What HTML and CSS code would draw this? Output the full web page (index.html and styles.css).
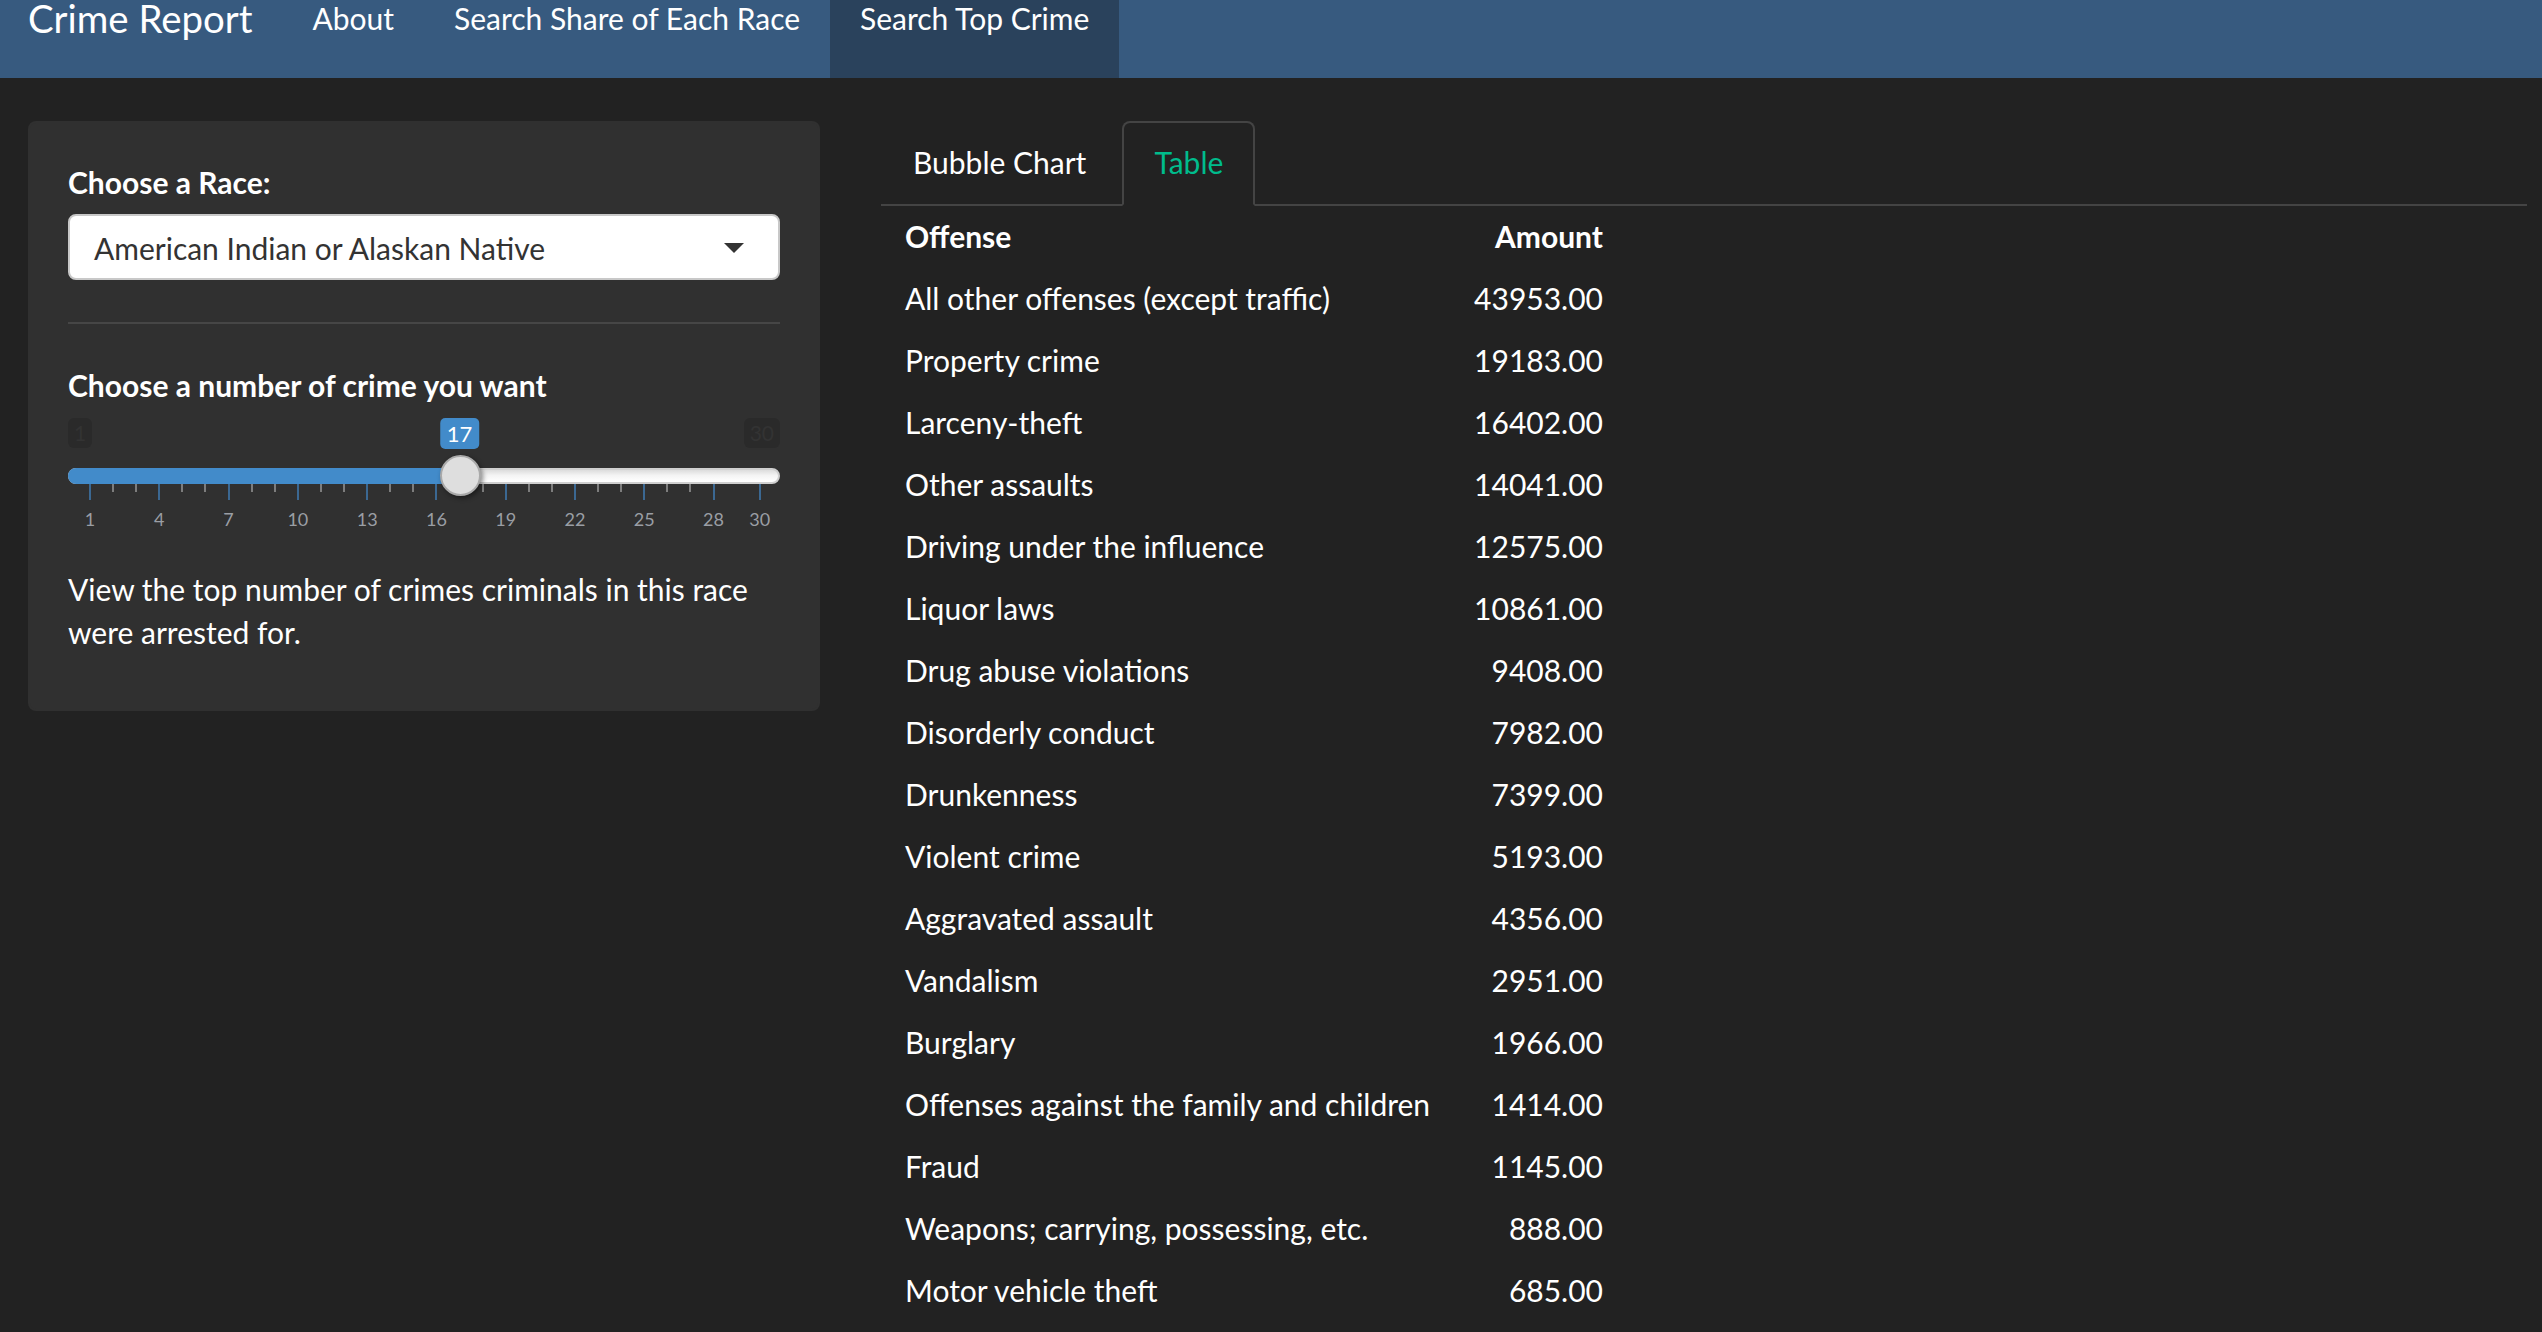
FILE: index.html
```html
<!DOCTYPE html>
<html lang="en">
<head>
<meta charset="utf-8">
<title>Crime Report</title>
<link rel="stylesheet" href="styles.css">
</head>
<body>
<nav class="navbar">
  <span class="brand">Crime Report</span>
  <ul class="nav">
    <li><a class="nav-link">About</a></li>
    <li><a class="nav-link">Search Share of Each Race</a></li>
    <li><a class="nav-link active">Search Top Crime</a></li>
  </ul>
</nav>

<div class="page">
  <aside class="well">
    <label class="control-label">Choose a Race:</label>
    <div class="select">
      <span class="select-value">American Indian or Alaskan Native</span>
      <span class="caret"></span>
    </div>
    <hr class="divider">
    <label class="control-label">Choose a number of crime you want</label>
    <div class="irs" style="--p:0.5517">
      <div class="irs-top">
        <span class="irs-min">1</span>
        <span class="irs-single">17</span>
        <span class="irs-max">30</span>
      </div>
      <div class="irs-line">
        <div class="irs-bar"></div>
        <div class="irs-handle"></div>
      </div>
      <div class="irs-grid">
        <div class="tk major"><i></i><b>1</b></div>
        <div class="tk"><i></i></div>
        <div class="tk"><i></i></div>
        <div class="tk major"><i></i><b>4</b></div>
        <div class="tk"><i></i></div>
        <div class="tk"><i></i></div>
        <div class="tk major"><i></i><b>7</b></div>
        <div class="tk"><i></i></div>
        <div class="tk"><i></i></div>
        <div class="tk major"><i></i><b>10</b></div>
        <div class="tk"><i></i></div>
        <div class="tk"><i></i></div>
        <div class="tk major"><i></i><b>13</b></div>
        <div class="tk"><i></i></div>
        <div class="tk"><i></i></div>
        <div class="tk major"><i></i><b>16</b></div>
        <div class="tk"><i></i></div>
        <div class="tk"><i></i></div>
        <div class="tk major"><i></i><b>19</b></div>
        <div class="tk"><i></i></div>
        <div class="tk"><i></i></div>
        <div class="tk major"><i></i><b>22</b></div>
        <div class="tk"><i></i></div>
        <div class="tk"><i></i></div>
        <div class="tk major"><i></i><b>25</b></div>
        <div class="tk"><i></i></div>
        <div class="tk"><i></i></div>
        <div class="tk major"><i></i><b>28</b></div>
        <div class="tk none"></div>
        <div class="tk major"><i></i><b>30</b></div>
      </div>
    </div>
    <p class="help">View the top number of crimes criminals in this race were arrested for.</p>
  </aside>

  <main class="main">
    <ul class="tabs">
      <li><a class="tab">Bubble Chart</a></li>
      <li><a class="tab active">Table</a></li>
    </ul>
    <table class="data">
      <thead>
        <tr><th>Offense</th><th class="num">Amount</th></tr>
      </thead>
      <tbody>
        <tr><td>All other offenses (except traffic)</td><td class="num">43953.00</td></tr>
        <tr><td>Property crime</td><td class="num">19183.00</td></tr>
        <tr><td>Larceny-theft</td><td class="num">16402.00</td></tr>
        <tr><td>Other assaults</td><td class="num">14041.00</td></tr>
        <tr><td>Driving under the influence</td><td class="num">12575.00</td></tr>
        <tr><td>Liquor laws</td><td class="num">10861.00</td></tr>
        <tr><td>Drug abuse violations</td><td class="num">9408.00</td></tr>
        <tr><td>Disorderly conduct</td><td class="num">7982.00</td></tr>
        <tr><td>Drunkenness</td><td class="num">7399.00</td></tr>
        <tr><td>Violent crime</td><td class="num">5193.00</td></tr>
        <tr><td>Aggravated assault</td><td class="num">4356.00</td></tr>
        <tr><td>Vandalism</td><td class="num">2951.00</td></tr>
        <tr><td>Burglary</td><td class="num">1966.00</td></tr>
        <tr><td>Offenses against the family and children</td><td class="num">1414.00</td></tr>
        <tr><td>Fraud</td><td class="num">1145.00</td></tr>
        <tr><td>Weapons; carrying, possessing, etc.</td><td class="num">888.00</td></tr>
        <tr><td>Motor vehicle theft</td><td class="num">685.00</td></tr>
      </tbody>
    </table>
  </main>
</div>
</body>
</html>
```

FILE: styles.css
```css
* { box-sizing: border-box; }

html, body {
  margin: 0;
  padding: 0;
  background: #222222;
  color: #ffffff;
  font-family: Lato, "Open Sans", "Liberation Sans", sans-serif;
  font-size: 30px;
  line-height: 42.86px;
  overflow: hidden;
}

/* ---------- navbar ---------- */
.navbar {
  display: flex;
  align-items: stretch;
  height: 78px;
  background: #375a7f;
  padding-left: 28px;
}

.brand {
  font-size: 38.4px;
  line-height: 36px;
  color: #ffffff;
  padding-right: 30px;
  white-space: nowrap;
}

.nav {
  display: flex;
  align-items: stretch;
  list-style: none;
  margin: 0;
  padding: 0;
}

.nav li { display: flex; }

.nav-link {
  display: block;
  padding: 0 30px;
  font-size: 30px;
  line-height: 36px;
  color: #ffffff;
  white-space: nowrap;
}

.nav-link.active { background: #2a425c; }

/* ---------- page layout ---------- */
.page {
  display: flex;
  align-items: flex-start;
  padding: 43px 15px 0 28px;
}

/* ---------- sidebar well ---------- */
.well {
  flex: 0 0 792px;
  display: flex;
  flex-direction: column;
  background: #303030;
  border: 2px solid #303030;
  border-radius: 8px;
  padding: 38px;
}

.control-label {
  display: block;
  font-weight: 700;
  margin-bottom: 10px;
}

.select {
  display: flex;
  align-items: center;
  justify-content: space-between;
  height: 66px;
  background: #ffffff;
  border: 2px solid #c8c8c8;
  border-radius: 8px;
  padding: 0 34px 0 24px;
  color: #333333;
}

.select-value { line-height: 42px; padding-top: 2px; }

.caret {
  width: 0;
  height: 0;
  border-left: 10px solid transparent;
  border-right: 10px solid transparent;
  border-top: 10px solid #333333;
  margin-top: 2px;
}

.divider {
  border: 0;
  border-top: 2px solid #464646;
  margin: 42px 0 40px 0;
  height: 0;
}

/* ---------- slider ---------- */
.irs {
  position: relative;
  margin-top: 1px;
}

.irs-top {
  position: relative;
  display: flex;
  justify-content: space-between;
  height: 31px;
}

.irs-min, .irs-max {
  display: block;
  height: 30px;
  padding: 0 6px;
  font-size: 21px;
  line-height: 30px;
  color: #333333;
  background: #2a2a2a;
  border-radius: 6px;
}

.irs-single {
  position: absolute;
  top: 0;
  left: calc(22px + 670px * var(--p));
  transform: translateX(-50%);
  height: 31px;
  padding: 0 7px;
  font-size: 22px;
  line-height: 31px;
  color: #ffffff;
  background: #428bca;
  border-radius: 5px;
}

.irs-line {
  position: relative;
  margin-top: 19px;
  height: 16px;
  border-radius: 8px;
  border: 2px solid #cfcfcf;
  background: linear-gradient(to bottom, #dcdcdc 0%, #f4f4f4 45%, #ffffff 100%);
}

.irs-bar {
  position: absolute;
  top: -2px;
  left: -2px;
  height: 16px;
  width: calc(24px + 670px * var(--p));
  background: #428bca;
  border-radius: 8px 0 0 8px;
}

.irs-handle {
  position: absolute;
  top: -15px;
  left: calc(20px + 670px * var(--p) - 20px);
  width: 41px;
  height: 41px;
  border-radius: 50%;
  background: #dedede;
  border: 2px solid #a9a9a9;
  box-shadow: 2px 2px 5px rgba(0, 0, 0, 0.45);
}

.irs-grid {
  display: flex;
  justify-content: space-between;
  padding: 0 20px 0 22px;
  height: 56px;
}

.tk {
  width: 0;
  display: flex;
  flex-direction: column;
  align-items: center;
}

.tk i {
  display: block;
  flex: none;
  width: 2px;
  height: 8px;
  background: #7d7d7d;
}

.tk.major i {
  height: 16px;
  background: #3b6892;
}

.tk b {
  display: block;
  margin-top: 10px;
  font-weight: 400;
  font-size: 18px;
  line-height: 18px;
  color: #9a9ea4;
  white-space: nowrap;
}

.help {
  margin: 28px 0 18px 0;
}

/* ---------- main panel ---------- */
.main {
  flex: 1;
  margin-left: 61px;
}

.tabs {
  display: flex;
  list-style: none;
  margin: 0;
  padding: 0;
  border-bottom: 2px solid #444444;
}

.tabs li {
  margin-bottom: -2px;
  margin-right: 4px;
}

.tab {
  display: block;
  padding: 18px 30px 20px 30px;
  border: 2px solid transparent;
  border-radius: 8px 8px 0 0;
  color: #ffffff;
  line-height: 42.86px;
  white-space: nowrap;
}

.tab.active {
  color: #00bc8c;
  background: #222222;
  border-color: #444444;
  border-bottom-color: transparent;
}

.data {
  border-collapse: collapse;
  margin-top: 1px;
}

.data th, .data td {
  padding: 8px 24px 12px 24px;
  line-height: 42px;
  text-align: left;
  white-space: nowrap;
}

.data td.num, .data th.num {
  text-align: right;
  padding-left: 20px;
  padding-right: 23px;
}

.data th { font-weight: 700; }
```
